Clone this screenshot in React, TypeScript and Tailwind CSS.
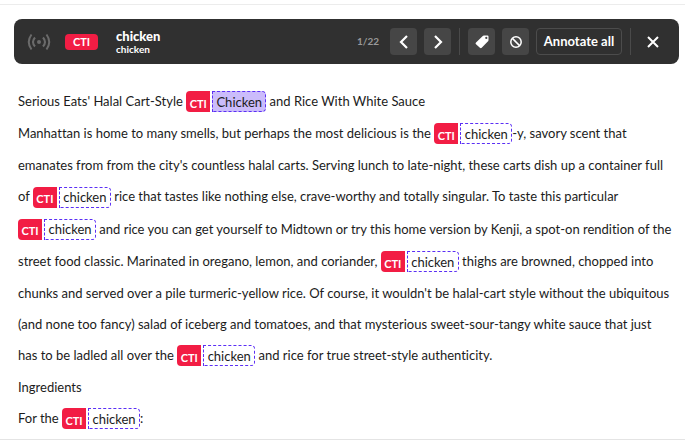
import { ReactNode } from "react";

function Tag({ children, active = false }: { children: ReactNode; active?: boolean }) {
  return (
    <span className="mt-1 mb-1.5 inline-flex h-[21px] gap-0.5 align-middle">
      <span className="flex w-6 items-center justify-center rounded-l bg-[#f21d44] pt-[3px] text-[11px] leading-none font-bold text-white">
        CTI
      </span>
      <mark
        className={`flex items-center justify-center rounded-r border border-dashed border-[#5b2ff5] pt-px leading-none text-[#1b1b1b] ${
          active ? "w-[54px] bg-[#cbbcfb]" : "w-[52px] bg-transparent"
        }`}
      >
        {children}
      </mark>
    </span>
  );
}

function IconButton({ label, children }: { label: string; children: ReactNode }) {
  return (
    <button aria-label={label} className="flex size-[27px] items-center justify-center rounded bg-[#464646] text-white">
      {children}
    </button>
  );
}

export default function App() {
  return (
    <div className="border-b border-[#e4e4e4] bg-white pt-1 pb-1 font-['Lato','Liberation_Sans',sans-serif] text-[#1b1b1b] [font-variant-ligatures:none]">
      <header className="border-t border-[#ececec] pt-[14px] pr-[6px] pl-[14px]">
        <div className="flex h-[45px] items-center rounded-lg bg-[#303030] pr-5 pl-[13px] text-white">
          <svg viewBox="0 0 24 18" className="h-[18px] w-6 text-[#6b6b6b]" fill="none" stroke="currentColor" strokeWidth="2">
            <circle cx="12" cy="9" r="2" fill="currentColor" stroke="none" />
            <path d="M8 4.500Q4 9 8 13.500M16 4.500Q20 9 16 13.500M4.500 1.500Q-1 9 4.500 16.500M19.500 1.500Q25 9 19.500 16.500" />
          </svg>
          <span className="ml-[14px] flex h-4 w-[33px] items-center justify-center rounded bg-[#f21d44] text-[11px] leading-none font-bold">
            CTI
          </span>
          <div className="ml-[18px] flex flex-col">
            <strong className="text-[13px] leading-[14px] font-black">chicken</strong>
            <span className="text-[10px] leading-[12px] font-bold">chicken</span>
          </div>
          <span className="mr-[11px] ml-auto text-[10px] font-bold text-[#999]">1/22</span>
          <div className="flex items-center gap-[7px]">
            <IconButton label="Previous">
              <svg viewBox="0 0 12 14" className="h-[14px] w-3" fill="none" stroke="currentColor" strokeWidth="2.200">
                <path d="M9 1L3 7L9 13" />
              </svg>
            </IconButton>
            <IconButton label="Next">
              <svg viewBox="0 0 12 14" className="h-[14px] w-3" fill="none" stroke="currentColor" strokeWidth="2.200">
                <path d="M3 1L9 7L3 13" />
              </svg>
            </IconButton>
          </div>
          <span className="mx-2 h-[27px] w-px bg-[#4a4a4a]" />
          <div className="flex items-center gap-[7px]">
            <IconButton label="Tag">
              <svg viewBox="0 0 14 14" className="size-[14px]" fill="currentColor">
                <path fillRule="evenodd" d="M7.500 1.200Q8 .5 9 .5H12.500Q13.500 .5 13.500 1.500V5Q13.500 6 12.800 6.600L6.700 12.800Q5.800 13.700 4.900 12.800L1 9.300Q0 8.300 1 7.400ZM11.300 1.800A1.100 1.100 0 1 0 11.300 4A1.100 1.100 0 1 0 11.300 1.800Z" />
              </svg>
            </IconButton>
            <IconButton label="Reject">
              <svg viewBox="0 0 12 12" className="size-3" fill="none" stroke="currentColor" strokeWidth="1.500">
                <circle cx="6" cy="6" r="5.200" />
                <path d="M2.400 2.400L9.600 9.600" />
              </svg>
            </IconButton>
            <button className="h-[27px] w-[86px] rounded border border-[#4c4c4c] text-[13px] leading-none font-bold whitespace-nowrap">
              Annotate all
            </button>
          </div>
          <span className="ml-2 h-[27px] w-px bg-[#4a4a4a]" />
          <button aria-label="Close" className="ml-4 flex h-[27px] w-3 items-center justify-center">
            <svg viewBox="0 0 12 12" className="size-3" fill="none" stroke="currentColor" strokeWidth="2">
              <path d="M1 1L11 11M11 1L1 11" />
            </svg>
          </button>
        </div>
      </header>
      <main className="mt-[22px] pl-[18px] text-[13px] leading-[31px] whitespace-nowrap">
        <p>
          Serious Eats' Halal Cart-Style <Tag active>Chicken</Tag> and Rice With White Sauce
        </p>
        <p>
          Manhattan is home to many smells, but perhaps the most delicious is the <Tag>chicken</Tag>-y, savory scent that
          <br />
          emanates from from the city's countless halal carts. Serving lunch to late-night, these carts dish up a container full
          <br />
          of <Tag>chicken</Tag> rice that tastes like nothing else, crave-worthy and totally singular. To taste this particular
          <br />
          <Tag>chicken</Tag> and rice you can get yourself to Midtown or try this home version by Kenji, a spot-on rendition of the
          <br />
          street food classic. Marinated in oregano, lemon, and coriander, <Tag>chicken</Tag> thighs are browned, chopped into
          <br />
          chunks and served over a pile turmeric-yellow rice. Of course, it wouldn't be halal-cart style without the ubiquitous
          <br />
          (and none too fancy) salad of iceberg and tomatoes, and that mysterious sweet-sour-tangy white sauce that just
          <br />
          has to be ladled all over the <Tag>chicken</Tag> and rice for true street-style authenticity.
        </p>
        <p>Ingredients</p>
        <p>
          For the <Tag>chicken</Tag>:
        </p>
      </main>
    </div>
  );
}
